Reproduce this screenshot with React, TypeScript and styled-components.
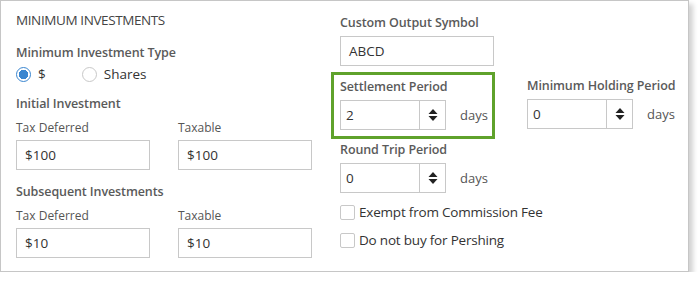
import styled, { createGlobalStyle } from 'styled-components';

const GlobalStyle = createGlobalStyle`
    body {
        margin: 0;
        background: #ffffff;
        font-family: "Open Sans", "Noto Sans", sans-serif;
    }
`;

const Panel = styled.div`
    box-sizing: border-box;
    width: 689px;
    height: 272px;
    border: 1px solid #c6c6c6;
    box-shadow: 4px 4px 5px rgba(0, 0, 0, 0.18);
    display: flex;
    padding: 9px 0 0 15px;
    background: #fff;
`;

const LeftColumn = styled.div`
    width: 324px;
    display: flex;
    flex-direction: column;
`;

const RightColumn = styled.div`
    display: flex;
    flex-direction: column;
`;

const Title = styled.div`
    font-size: 13.5px;
    line-height: 20px;
    letter-spacing: -0.4px;
    color: #444;
    text-transform: uppercase;
`;

const Label = styled.div<{ $top?: number }>`
    font-size: 12.5px;
    font-weight: 600;
    line-height: 18px;
    letter-spacing: -0.1px;
    color: #5a5a5a;
    margin-top: ${({ $top }) => $top ?? 0}px;
`;

const SubLabel = styled.div`
    font-size: 12px;
    line-height: 16px;
    color: #555;
    margin-bottom: 4px;
`;

const RadioRow = styled.div`
    display: flex;
    align-items: center;
    gap: 36px;
    height: 20px;
    margin-top: 2px;
`;

const RadioOption = styled.label`
    display: flex;
    align-items: center;
    gap: 7px;
    font-size: 13.5px;
    color: #333;
`;

const Radio = styled.span<{ $checked?: boolean }>`
    box-sizing: border-box;
    width: 15px;
    height: 15px;
    border-radius: 50%;
    border: 1px solid ${({ $checked }) => ($checked ? '#3a86d0' : '#c8c8c8')};
    background: ${({ $checked }) => ($checked ? 'radial-gradient(circle, #3a86d0 0 4.5px, #fff 5px)' : '#fff')};
`;

const PairRow = styled.div`
    display: flex;
    gap: 28px;
    margin-top: 7px;
`;

const Field = styled.div`
    display: flex;
    flex-direction: column;
`;

const TextInput = styled.div<{ $width: number }>`
    box-sizing: border-box;
    width: ${({ $width }) => $width}px;
    height: 30px;
    border: 1px solid #c8c8c8;
    padding: 0 8px;
    display: flex;
    align-items: center;
    font-size: 13.5px;
    color: #333;
`;

const SpinRow = styled.div`
    display: flex;
    align-items: center;
    gap: 14px;
    margin-top: 4px;
`;

const Spinner = styled.div`
    box-sizing: border-box;
    width: 106px;
    height: 30px;
    border: 1px solid #c8c8c8;
    display: flex;
`;

const SpinValue = styled.div`
    flex: 1;
    display: flex;
    align-items: center;
    padding-left: 5px;
    font-size: 13.5px;
    color: #333;
`;

const SpinArrows = styled.div`
    width: 25px;
    border-left: 1px solid #c8c8c8;
    display: flex;
    align-items: center;
    justify-content: center;
`;

const Unit = styled.span`
    font-size: 13px;
    color: #555;
`;

const PeriodRow = styled.div`
    display: flex;
    align-items: flex-start;
    margin-top: 6px;
`;

const Highlight = styled.div`
    box-sizing: border-box;
    width: 164px;
    height: 67px;
    margin-left: -9px;
    border: 3px solid #5fa22b;
    padding: 3px 0 0 6px;
`;

const Plain = styled.div`
    margin-left: 32px;
    padding-top: 5px;
`;

const CheckRow = styled.label<{ $top: number }>`
    display: flex;
    align-items: center;
    gap: 4px;
    margin-top: ${({ $top }) => $top}px;
    font-size: 13.5px;
    letter-spacing: -0.2px;
    color: #333;
`;

const Checkbox = styled.span`
    box-sizing: border-box;
    width: 15px;
    height: 15px;
    border: 1px solid #c8c8c8;
    border-radius: 2px;
`;

const Arrows = () => (
    <svg width="10" height="14" viewBox="0 0 10 14">
        <path d="M5 1 L9.5 6 L0.5 6 Z" fill="#222" />
        <path d="M5 13 L9.5 8 L0.5 8 Z" fill="#222" />
    </svg>
);

const PeriodSpinner = ({ value }: { value: string }) => (
    <SpinRow>
        <Spinner>
            <SpinValue>{value}</SpinValue>
            <SpinArrows><Arrows /></SpinArrows>
        </Spinner>
        <Unit>days</Unit>
    </SpinRow>
);

const App = () => {
    return (
        <>
            <GlobalStyle />
            <Panel>
                <LeftColumn>
                    <Title>Minimum Investments</Title>
                    <Label $top={14}>Minimum Investment Type</Label>
                    <RadioRow>
                        <RadioOption><Radio $checked />$</RadioOption>
                        <RadioOption><Radio />Shares</RadioOption>
                    </RadioRow>
                    <Label $top={11}>Initial Investment</Label>
                    <PairRow>
                        <Field>
                            <SubLabel>Tax Deferred</SubLabel>
                            <TextInput $width={134}>$100</TextInput>
                        </Field>
                        <Field>
                            <SubLabel>Taxable</SubLabel>
                            <TextInput $width={134}>$100</TextInput>
                        </Field>
                    </PairRow>
                    <Label $top={13}>Subsequent Investments</Label>
                    <PairRow>
                        <Field>
                            <SubLabel>Tax Deferred</SubLabel>
                            <TextInput $width={134}>$10</TextInput>
                        </Field>
                        <Field>
                            <SubLabel>Taxable</SubLabel>
                            <TextInput $width={134}>$10</TextInput>
                        </Field>
                    </PairRow>
                </LeftColumn>
                <RightColumn>
                    <Label $top={4}>Custom Output Symbol</Label>
                    <TextInput $width={154} style={{ marginTop: 4 }}>ABCD</TextInput>
                    <PeriodRow>
                        <Highlight>
                            <Label>Settlement Period</Label>
                            <PeriodSpinner value="2" />
                        </Highlight>
                        <Plain>
                            <Label>Minimum Holding Period</Label>
                            <PeriodSpinner value="0" />
                        </Plain>
                    </PeriodRow>
                    <Label $top={2}>Round Trip Period</Label>
                    <PeriodSpinner value="0" />
                    <CheckRow $top={10}><Checkbox />Exempt from Commission Fee</CheckRow>
                    <CheckRow $top={10}><Checkbox />Do not buy for Pershing</CheckRow>
                </RightColumn>
            </Panel>
        </>
    );
};

export default App;
